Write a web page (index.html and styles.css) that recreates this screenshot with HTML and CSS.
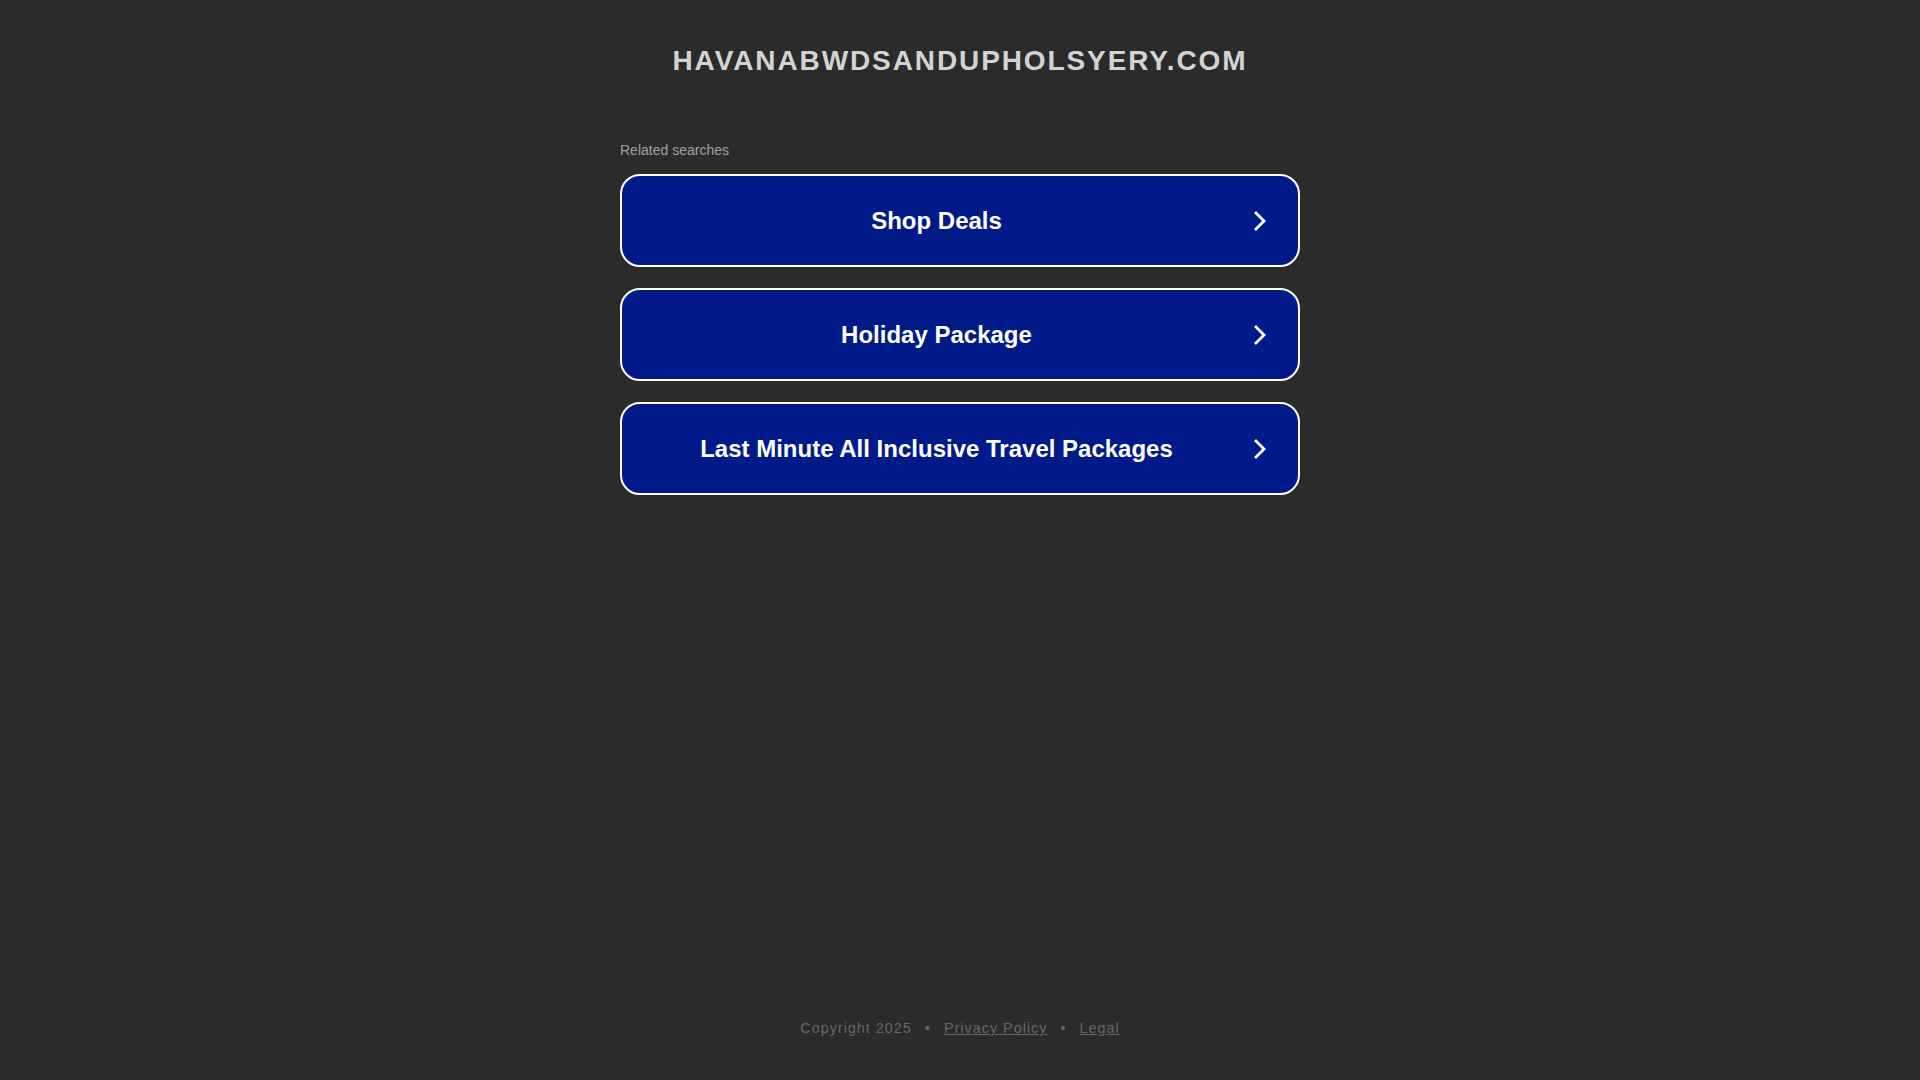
FILE: index.html
```html
<!DOCTYPE html>
<html>
<head>
<meta charset="utf-8">
<link rel="stylesheet" href="styles.css">
</head>
<body>
<div class="page">
  <header class="header">
    <h1 class="title">HAVANABWDSANDUPHOLSYERY.COM</h1>
  </header>
  <main class="main">
    <div class="related">Related searches</div>
    <div class="list">
      <a class="item" href="#"><span class="label">Shop Deals</span><svg class="chev" viewBox="0 0 12 20" width="12" height="20"><path d="M2 2 L10 10 L2 18" fill="none" stroke="#fff" stroke-width="2.8" stroke-linecap="square"/></svg></a>
      <a class="item" href="#"><span class="label">Holiday Package</span><svg class="chev" viewBox="0 0 12 20" width="12" height="20"><path d="M2 2 L10 10 L2 18" fill="none" stroke="#fff" stroke-width="2.8" stroke-linecap="square"/></svg></a>
      <a class="item" href="#"><span class="label">Last Minute All Inclusive Travel Packages</span><svg class="chev" viewBox="0 0 12 20" width="12" height="20"><path d="M2 2 L10 10 L2 18" fill="none" stroke="#fff" stroke-width="2.8" stroke-linecap="square"/></svg></a>
    </div>
  </main>
  <footer class="footer">
    <span>Copyright 2025</span><span class="dot">•</span><a href="#">Privacy Policy</a><span class="dot">•</span><a href="#">Legal</a>
  </footer>
</div>
</body>
</html>
```

FILE: styles.css
```css
html, body {
  margin: 0;
  padding: 0;
  background: #2b2b2b;
  font-family: "Liberation Sans", Arial, sans-serif;
}
.page {
  height: 1080px;
  display: flex;
  flex-direction: column;
  align-items: center;
}
.header {
  padding-top: 43px;
}
.title {
  margin: 0;
  font-size: 28px;
  line-height: 36px;
  font-weight: bold;
  letter-spacing: 1.9px;
  color: #d3d3d3;
  text-align: center;
}
.main {
  width: 680px;
  margin-top: 63px;
}
.related {
  font-size: 14px;
  line-height: 16px;
  color: #a0a0a0;
  margin-bottom: 16px;
}
.list {
  display: flex;
  flex-direction: column;
  gap: 21px;
}
.item {
  box-sizing: border-box;
  height: 93px;
  border: 2px solid #ffffff;
  border-radius: 20px;
  background: #011a8a;
  display: flex;
  align-items: center;
  position: relative;
  text-decoration: none;
}
.label {
  flex: 1;
  text-align: center;
  color: #ffffff;
  font-weight: bold;
  font-size: 24px;
  padding-left: 20px;
  padding-right: 67px;
}
.chev {
  position: absolute;
  right: 32px;
  top: 35px;
}
.footer {
  margin-top: auto;
  margin-bottom: 44px;
  font-size: 14.4px;
  letter-spacing: 1px;
  color: #666666;
  display: flex;
  align-items: center;
}
.footer a {
  color: #666666;
  text-decoration: underline;
}
.dot {
  margin: 0 13px;
}
```
